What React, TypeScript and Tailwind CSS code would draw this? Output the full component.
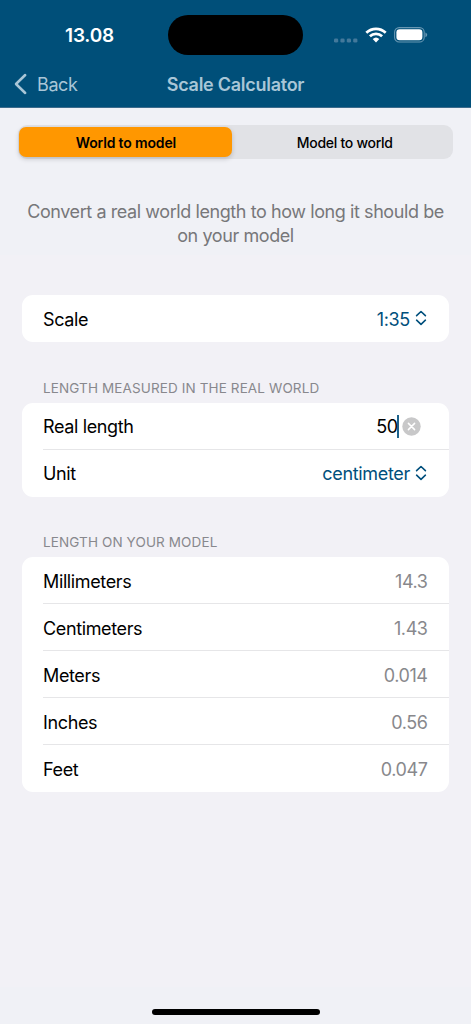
import React, { useState } from 'react'

interface RowProps {
  label: string
  divided?: boolean
  children: React.ReactNode
}

const Row: React.FC<RowProps> = ({ label, divided, children }) => (
  <div className="relative flex h-[47px] items-center justify-between pl-[21px] pr-[22px] pt-[1.6px]">
    <span className="text-[18px] tracking-[-0.37px]">{label}</span>
    {children}
    {divided && <div className="absolute bottom-0 left-[21px] right-0 h-px bg-[#e6e6e8]" />}
  </div>
)

const SectionTitle: React.FC<{ children: React.ReactNode }> = ({ children }) => (
  <h2 className="mb-[5px] h-5 pl-[21px] text-[13.5px] leading-5 tracking-[0.12px] text-[#88888d]">{children}</h2>
)

const Card: React.FC<{ children: React.ReactNode }> = ({ children }) => (
  <div className="overflow-hidden rounded-[11px] bg-white">{children}</div>
)

const Picker: React.FC<{ value: string }> = ({ value }) => (
  <button className="flex items-center gap-[5px] text-[18px] text-[#004f7c]">
    <span className="tracking-[-0.32px]">{value}</span>
    <svg className="-mt-[2px] h-4 w-3" viewBox="0 0 12 16" fill="none" stroke="currentColor" strokeWidth="1.6" strokeLinecap="round" strokeLinejoin="round">
      <path d="M1.6 5.6 6 1.5l4.4 4.1M1.6 10.2 6 14.3l4.4-4.1" />
    </svg>
  </button>
)

const StatusBar = () => (
  <div className="flex h-[61px] pt-[15px]">
    <div className="flex w-[168px] justify-end pr-[54px]">
      <span className="mt-[7px] text-[19px] font-semibold leading-7 tracking-[-0.2px] text-white">13.08</span>
    </div>
    <div className="h-10 w-[135px] rounded-full bg-black" />
    <div className="ml-[31px] flex h-10 items-center">
      <svg className="mt-[10px] h-[5px] w-6" viewBox="0 0 24 5" fill="#43799b">
        <rect x="0" y="0.4" width="4.2" height="4.2" rx="1.4" />
        <rect x="6.4" y="0.4" width="4.2" height="4.2" rx="1.4" />
        <rect x="12.8" y="0.4" width="4.2" height="4.2" rx="1.4" />
        <rect x="19.2" y="0.4" width="4.2" height="4.2" rx="1.4" />
      </svg>
      <svg className="ml-[7px] h-[16px] w-[22px]" viewBox="0 0 22 16" fill="none" stroke="#fff" strokeWidth="2.7">
        <path d="M1.3 5.7a14 14 0 0 1 19.4 0" />
        <path d="M4.9 9.3a8.8 8.8 0 0 1 12.2 0" />
        <path d="M11 15.4 7.7 12.1a4.8 4.8 0 0 1 6.6 0z" fill="#fff" stroke="none" />
      </svg>
      <svg className="ml-[7px] h-4 w-[34px]" viewBox="0 0 34 16" fill="none">
        <rect x="0.6" y="0.6" width="29.6" height="14.4" rx="4.6" stroke="#6797b2" strokeWidth="1.1" />
        <rect x="2.4" y="2.3" width="26" height="11" rx="3.2" fill="#fff" />
        <path d="M31.4 5.4c1.1.4 1.8 1.3 1.8 2.4s-.7 2-1.8 2.4z" fill="#6797b2" />
      </svg>
    </div>
  </div>
)

const results = [
  { label: 'Millimeters', value: '14.3' },
  { label: 'Centimeters', value: '1.43' },
  { label: 'Meters', value: '0.014' },
  { label: 'Inches', value: '0.56' },
  { label: 'Feet', value: '0.047' },
]

const modes = ['World to model', 'Model to world']

export default function App() {
  const [mode, setMode] = useState(0)

  return (
    <div className="flex h-[1024px] w-[471px] flex-col overflow-hidden bg-[#f2f1f6] font-['Inter',sans-serif] text-black">
      <header className="h-[108px] shrink-0 border-b border-[#3c6b8c] bg-[#004f79]">
        <StatusBar />
        <div className="grid h-[46px] grid-cols-[1fr_auto_1fr] items-center text-[18px] text-[#a9c6d7]">
          <button className="flex items-center gap-[10px] pl-[14px]">
            <svg className="h-[22px] w-[13px]" viewBox="0 0 13 22" fill="none" stroke="currentColor" strokeWidth="2.5" strokeLinecap="round" strokeLinejoin="round">
              <path d="M11.2 2 2 11l9.2 9" />
            </svg>
            <span className="tracking-[-0.4px]">Back</span>
          </button>
          <h1 className="font-semibold tracking-[-0.27px]">Scale Calculator</h1>
        </div>
      </header>

      <div className="h-[147px] shrink-0 bg-[#f0f1f6] px-[18px] pt-[17px]">
        <div className="grid h-[34px] grid-cols-[213px_1fr] gap-[6px] rounded-[9px] bg-[#e1e2e6] py-[2px] pl-[1.4px] pr-[2px]">
          {modes.map((label, i) => (
            <button
              key={label}
              onClick={() => setMode(i)}
              className={`rounded-[7px] text-[14px] ${mode === i ? 'bg-[#ff9700] font-semibold tracking-[-0.15px] shadow-[0_2px_5px_rgba(0,0,0,0.18)]' : 'font-medium tracking-[-0.28px]'}`}
            >
              {label}
            </button>
          ))}
        </div>
        <p className="mt-[41px] text-center text-[18px] leading-6 tracking-[-0.42px] text-[#77777a]">
          Convert a real world length to how long it should be on your model
        </p>
      </div>

      <main className="flex-1 px-[22px] pt-10">
        <Card>
          <Row label="Scale">
            <Picker value="1:35" />
          </Row>
        </Card>

        <section className="mt-[35.6px]">
          <SectionTitle>LENGTH MEASURED IN THE REAL WORLD</SectionTitle>
          <Card>
            <Row label="Real length" divided>
              <div className="flex items-center pr-[6px]">
                <span className="text-[18px] tracking-[-0.5px]">50</span>
                <span className="-ml-px h-[23px] w-[2px] bg-[#1c628b]" />
                <svg className="ml-[3.5px] size-[19px]" viewBox="0 0 19 19">
                  <circle cx="9.5" cy="9.5" r="9.2" fill="#c8c8c9" />
                  <path d="m6.4 6.4 6.2 6.2M12.6 6.4l-6.2 6.2" stroke="#fff" strokeWidth="1.5" strokeLinecap="round" />
                </svg>
              </div>
            </Row>
            <Row label="Unit">
              <Picker value="centimeter" />
            </Row>
          </Card>
        </section>

        <section className="mt-[35.4px]">
          <SectionTitle>LENGTH ON YOUR MODEL</SectionTitle>
          <Card>
            {results.map(({ label, value }, i) => (
              <Row key={label} label={label} divided={i < results.length - 1}>
                <span className="-mr-[0.6px] text-[18px] tracking-[-0.4px] text-[#88888c]">{value}</span>
              </Row>
            ))}
          </Card>
        </section>
      </main>

      <footer className="flex h-[37px] shrink-0 justify-center bg-[#f0f1f6] pt-[22px]">
        <div className="h-[6px] w-[168px] rounded-full bg-black" />
      </footer>
    </div>
  )
}
